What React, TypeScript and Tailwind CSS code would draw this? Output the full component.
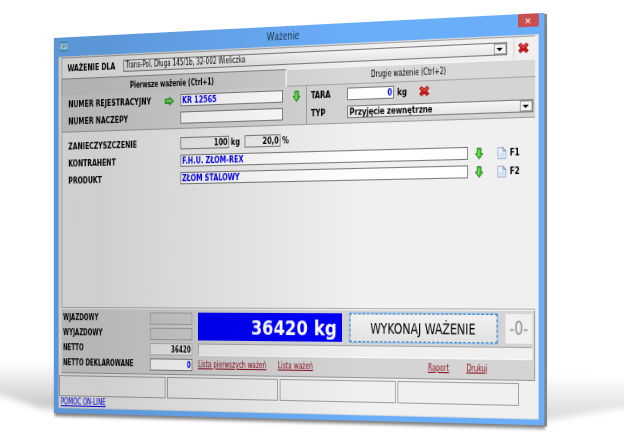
import React from "react";

const field =
  "h-3 min-w-0 border border-[#7c7c7c] px-px text-[9px] leading-[10px] font-bold outline-none";
const label = "text-[9px] leading-3 font-bold text-black whitespace-nowrap";

function DownArrow() {
  return (
    <svg viewBox="0 0 16 20" preserveAspectRatio="none" className="h-[11px] w-[9px]">
      <path d="M4 1h8v9h3.500L8 19 .5 10H4z" fill="#3fc12c" stroke="#14780e" strokeWidth="1.500" />
      <path d="M6 3h2v12L4 11h2z" fill="#a4ee8c" />
    </svg>
  );
}

function RightArrow() {
  return (
    <svg viewBox="0 0 20 16" preserveAspectRatio="none" className="h-[9px] w-3">
      <path d="M1 4.500h9V1l9 7-9 7v-3.500H1z" fill="#3fc12c" stroke="#14780e" strokeWidth="1.500" />
      <path d="M3 6h9V4.500L15 8H3z" fill="#a4ee8c" />
    </svg>
  );
}

function Cross() {
  return (
    <svg viewBox="0 0 20 20" preserveAspectRatio="none" className="h-2.5 w-3">
      <path
        d="M5 1.500 10 6l5-4.500L19 5l-4.500 5 4.500 5-4 3.500L10 14l-5 4.500L1 15l4.500-5L1 5z"
        fill="#cf1717"
        stroke="#8d0808"
        strokeWidth="1.500"
      />
      <path d="M5 3.500 10 8l5-4.500 1.500 1.500L10 10 3.500 5z" fill="#ee6a60" />
    </svg>
  );
}

function Page() {
  return (
    <svg viewBox="0 0 18 22" preserveAspectRatio="none" className="h-[11px] w-2.5">
      <path d="M1 1h10l6 6v14H1z" fill="#eef4fd" stroke="#93a3c0" strokeWidth="1.500" />
      <path d="M3 12 15 9v10H3z" fill="#cfe1f8" />
      <path d="M11 1v6h6z" fill="#ffffff" stroke="#5f7297" strokeWidth="1.500" />
    </svg>
  );
}

function Caret() {
  return (
    <span className="pointer-events-none flex h-full w-[14px] items-center justify-center border border-[#9a9a9a] bg-[#f4f4f4]">
      <svg viewBox="0 0 8 4" preserveAspectRatio="none" className="h-[3px] w-[7px]">
        <path d="M0 0h8L4 4z" fill="#000" />
      </svg>
    </span>
  );
}

function Combo({ id, value, bold }: { id: string; value: string; bold?: boolean }) {
  return (
    <div className="flex h-3 min-w-0 flex-1 border border-[#7c7c7c] bg-linear-to-b from-[#f6f6f6] to-[#e6e6e6]">
      <select
        id={id}
        className={
          "min-w-0 flex-1 appearance-none bg-transparent pl-0.5 leading-[10px] text-black outline-none " +
          (bold ? "text-[9px] font-bold" : "text-[8px]")
        }
      >
        <option>{value}</option>
      </select>
      <Caret />
    </div>
  );
}

function PartyRow({ id, name, value, hotkey }: { id: string; name: string; value: string; hotkey: string }) {
  return (
    <div className="flex h-3 items-center">
      <label htmlFor={id} className={label + " w-[145px]"}>
        {name}
      </label>
      <input id={id} defaultValue={value} className={field + " flex-1 bg-white text-[#0000f0]"} />
      <button aria-label={name + " – wybierz"} className="ml-2 flex">
        <DownArrow />
      </button>
      <button className="ml-4 flex w-[42px] items-center gap-1 text-[9px] leading-3 font-bold text-black">
        <Page />
        {hotkey}
      </button>
    </div>
  );
}

const weights = [
  { id: "in", name: "WJAZDOWY", value: "", look: "border-[#a2a2a2] bg-[#d0d0d0]" },
  { id: "out", name: "WYJAZDOWY", value: "", look: "border-[#a2a2a2] bg-[#d0d0d0]" },
  { id: "net", name: "NETTO", value: "36420", look: "border-[#b4b4b4] bg-[#efefef] text-black" },
  { id: "declared", name: "NETTO DEKLAROWANE", value: "0", look: "border-[#7c7c7c] bg-white text-[#0000f0]" },
];

export default function App() {
  return (
    <main className="relative min-h-[441px] w-full overflow-hidden bg-white pt-[38px] pl-[54px] font-['DejaVu_Sans_Condensed','DejaVu_Sans',sans-serif] perspective-[4000px] perspective-origin-[50%_290px]">
      <svg
        viewBox="0 0 624 441"
        preserveAspectRatio="none"
        className="absolute inset-0 h-full w-full"
        aria-hidden="true"
      >
        <defs>
          <linearGradient id="floorLeft" x1="0" y1="0" x2="0" y2="1">
            <stop offset="0.2" stopColor="#000" stopOpacity="0" />
            <stop offset="1" stopColor="#000" stopOpacity="0.24" />
          </linearGradient>
          <linearGradient id="floorRight" x1="0" y1="0" x2="0" y2="1">
            <stop offset="0" stopColor="#000" stopOpacity="0" />
            <stop offset="1" stopColor="#000" stopOpacity="0.16" />
          </linearGradient>
          <filter id="soft" x="-20%" y="-20%" width="140%" height="140%">
            <feGaussianBlur stdDeviation="3" />
          </filter>
        </defs>
        <path d="M-20 365 80 350v62L40 408 10 398-20 390z" fill="url(#floorLeft)" filter="url(#soft)" />
        <path d="M530 375l110 5v25l-60 10-50 8z" fill="url(#floorRight)" filter="url(#soft)" />
      </svg>

      <section
        aria-label="Ważenie"
        className="relative w-[104%] origin-left -rotate-y-[37.7deg] bg-[#6aaefa] px-1.5 pb-[5px] shadow-[3px_1px_0_#858585,1px_3px_3px_#00000080]"
      >
        <header className="flex h-[19px] items-start">
          <svg viewBox="0 0 18 18" preserveAspectRatio="none" className="mt-1 ml-0.5 h-2.5 w-2.5">
            <path d="M0 0h18v18H0z" fill="#4a9cc8" />
            <path d="M1 4h16v10H1z" fill="#eef8fc" />
            <path d="M3 6h3v1.500H4.500v3H6V12H3zM7.500 6h3v6h-3zM12 6h3v6h-1.500V9H12z" fill="#2b86b8" />
          </svg>
          <h1 className="flex-1 text-center font-['Open_Sans','Noto_Sans',sans-serif] text-[10px] leading-[18px] text-[#1c2a3a]">
            Ważenie
          </h1>
          <button aria-label="Zamknij" className="flex h-3 w-[23px] items-center justify-center bg-[#c94f4f] text-white">
            <svg viewBox="0 0 10 10" preserveAspectRatio="none" className="h-[5px] w-1.5">
              <path d="M1 1l8 8M9 1 1 9" stroke="#fff" strokeWidth="2" />
            </svg>
          </button>
        </header>

        <div className="border border-[#dcdcdc] bg-[#f0f0f0]">
          <div className="mx-[3px]">
            <div className="flex h-[21px] items-center border-t border-l border-[#a4a4a4] pl-[7px]">
              <label htmlFor="company" className={label + " w-[73px]"}>
                WAŻENIE DLA
              </label>
              <Combo id="company" value="Trans-Pol, Długa 145/1b, 32-002 Wieliczka" />
              <button
                aria-label="Wyczyść firmę"
                className="ml-[7px] flex h-full w-6 items-center border-l border-[#d4d4d4] pl-1"
              >
                <Cross />
              </button>
            </div>

            <div role="tablist" className="grid grid-cols-2 text-[8px] leading-[15px] text-black">
              <button
                role="tab"
                aria-selected="true"
                className="h-[17px] border-t border-l border-t-[#8a8a8a] border-l-[#8a8a8a] border-r-2 border-r-[#f4f4f4] bg-[#cfcfcf] font-bold"
              >
                Pierwsze ważenie (Ctrl+1)
              </button>
              <button
                role="tab"
                aria-selected="false"
                className="h-[17px] border-y border-t-[#f4f4f4] border-b-[#a8a8a8] bg-[#d8d8d8]"
              >
                Drugie ważenie (Ctrl+2)
              </button>
            </div>

            <div className="flex border-b border-l border-[#a0a0a0] bg-[#d4d4d4]">
              <div className="flex w-[54%] flex-col gap-[5px] border-r border-[#a0a0a0] pt-[3px] pr-[7px] pb-1 pl-2">
                <div className="flex h-3 items-center">
                  <label htmlFor="plate" className={label + " w-[125px]"}>
                    NUMER REJESTRACYJNY
                  </label>
                  <span className="w-5">
                    <RightArrow />
                  </span>
                  <input id="plate" defaultValue="KR 12565" className={field + " flex-1 bg-white text-[#0000f0]"} />
                  <button aria-label="Wybierz pojazd" className="ml-3 flex">
                    <DownArrow />
                  </button>
                </div>
                <div className="flex h-3 items-center pr-[21px]">
                  <label htmlFor="trailer" className={label + " w-[145px]"}>
                    NUMER NACZEPY
                  </label>
                  <input id="trailer" defaultValue="" className={field + " flex-1 bg-white text-[#0000f0]"} />
                </div>
              </div>
              <div className="flex flex-1 flex-col gap-[5px] pt-[3px] pr-0.5 pl-[5px]">
                <div className="flex h-3 items-center">
                  <label htmlFor="tare" className={label + " w-[43px]"}>
                    TARA
                  </label>
                  <input
                    id="tare"
                    defaultValue="0"
                    className={field + " w-[55px] bg-white text-right text-[#0000f0]"}
                  />
                  <span className={label + " ml-1 w-[25px]"}>kg</span>
                  <button aria-label="Wyczyść tarę" className="flex">
                    <Cross />
                  </button>
                </div>
                <div className="flex h-3 items-center">
                  <label htmlFor="type" className={label + " w-[43px]"}>
                    TYP
                  </label>
                  <Combo id="type" value="Przyjęcie zewnętrzne" bold />
                </div>
              </div>
            </div>

            <div className="flex min-h-[175px] flex-col gap-[5px] border-l border-[#a8a8a8] pt-2 pl-2">
              <div className="flex h-3 items-center">
                <label htmlFor="dirt" className={label + " w-[145px]"}>
                  ZANIECZYSZCZENIE
                </label>
                <input
                  id="dirt"
                  defaultValue="100"
                  className={field + " w-[61px] bg-[#f0f0f0] text-right text-black"}
                />
                <span className={label + " ml-0.5 w-[17px]"}>kg</span>
                <input
                  aria-label="Zanieczyszczenie w procentach"
                  defaultValue="20,0"
                  className={field + " w-11 bg-[#f0f0f0] text-right text-black"}
                />
                <span className={label + " ml-0.5"}>%</span>
              </div>
              <PartyRow id="client" name="KONTRAHENT" value="F.H.U. ZŁOM-REX" hotkey="F1" />
              <PartyRow id="product" name="PRODUKT" value="ZŁOM STALOWY" hotkey="F2" />
            </div>

            <div className="flex gap-[7px] border-t border-r border-b border-t-[#fafafa] border-r-[#9a9a9a] border-b-[#9a9a9a] bg-[#d4d4d4] pt-[3px] pr-0.5 pb-[3px] pl-0.5 shadow-[0_-1px_0_#b0b0b0]">
              <div className="flex flex-col gap-[3px]">
                {weights.map((w) => (
                  <div key={w.id} className="flex h-3 items-center">
                    <label
                      htmlFor={w.id}
                      className="w-[113px] text-[8px] leading-3 font-bold whitespace-nowrap text-black"
                    >
                      {w.name}
                    </label>
                    <input
                      id={w.id}
                      defaultValue={w.value}
                      className={
                        "h-3 w-[54px] border px-px text-right text-[8px] leading-[10px] font-bold outline-none " + w.look
                      }
                    />
                  </div>
                ))}
              </div>
              <div className="flex flex-1 flex-col gap-[3px]">
                <div className="flex h-[27px] gap-[9px]">
                  <output className="flex flex-1 items-center justify-end bg-[#0000fa] pr-1.5 font-['DejaVu_Sans',sans-serif] text-[20px] leading-none font-bold whitespace-nowrap text-white">
                    36420 kg
                  </output>
                  <button className="w-[170px] border border-dashed border-[#3c7fb8] bg-linear-to-b from-[#f2f2f2] to-[#e2e2e2] text-[14px] leading-none text-black outline outline-[#8cc0ee]">
                    WYKONAJ WAŻENIE
                  </button>
                  <button className="w-[30px] bg-[#f0f0f0] text-[17px] leading-none text-[#8c8c8c]">-0-</button>
                </div>
                <div className="h-3 border border-t-[#a8a8a8] border-r-[#fafafa] border-b-[#fafafa] border-l-[#a8a8a8] bg-[#f0f0f0]" />
                <nav className="flex h-3 items-center text-[8px] leading-3 text-[#8c1020] underline">
                  <a href="#first">Lista pierwszych ważeń</a>
                  <a href="#all" className="ml-3.5 flex-1">
                    Lista ważeń
                  </a>
                  <a href="#report" className="mr-5">
                    Raport
                  </a>
                  <a href="#print" className="mr-[50px]">
                    Drukuj
                  </a>
                </nav>
              </div>
            </div>
          </div>

          <div className="mt-0.5 mr-[21px] grid grid-cols-4 gap-0.5">
            {[0, 1, 2, 3].map((n) => (
              <div key={n} className="h-[21px] border border-[#a0a0a0] bg-[#f0f0f0]" />
            ))}
          </div>
          <a href="#help" className="ml-0.5 block text-[8px] leading-[11px] text-[#0000f0] underline">
            POMOC ON-LINE
          </a>
        </div>
        <div className="pointer-events-none absolute inset-0 bg-linear-to-r from-black/14 from-10% to-transparent to-65%" />
      </section>
    </main>
  );
}
